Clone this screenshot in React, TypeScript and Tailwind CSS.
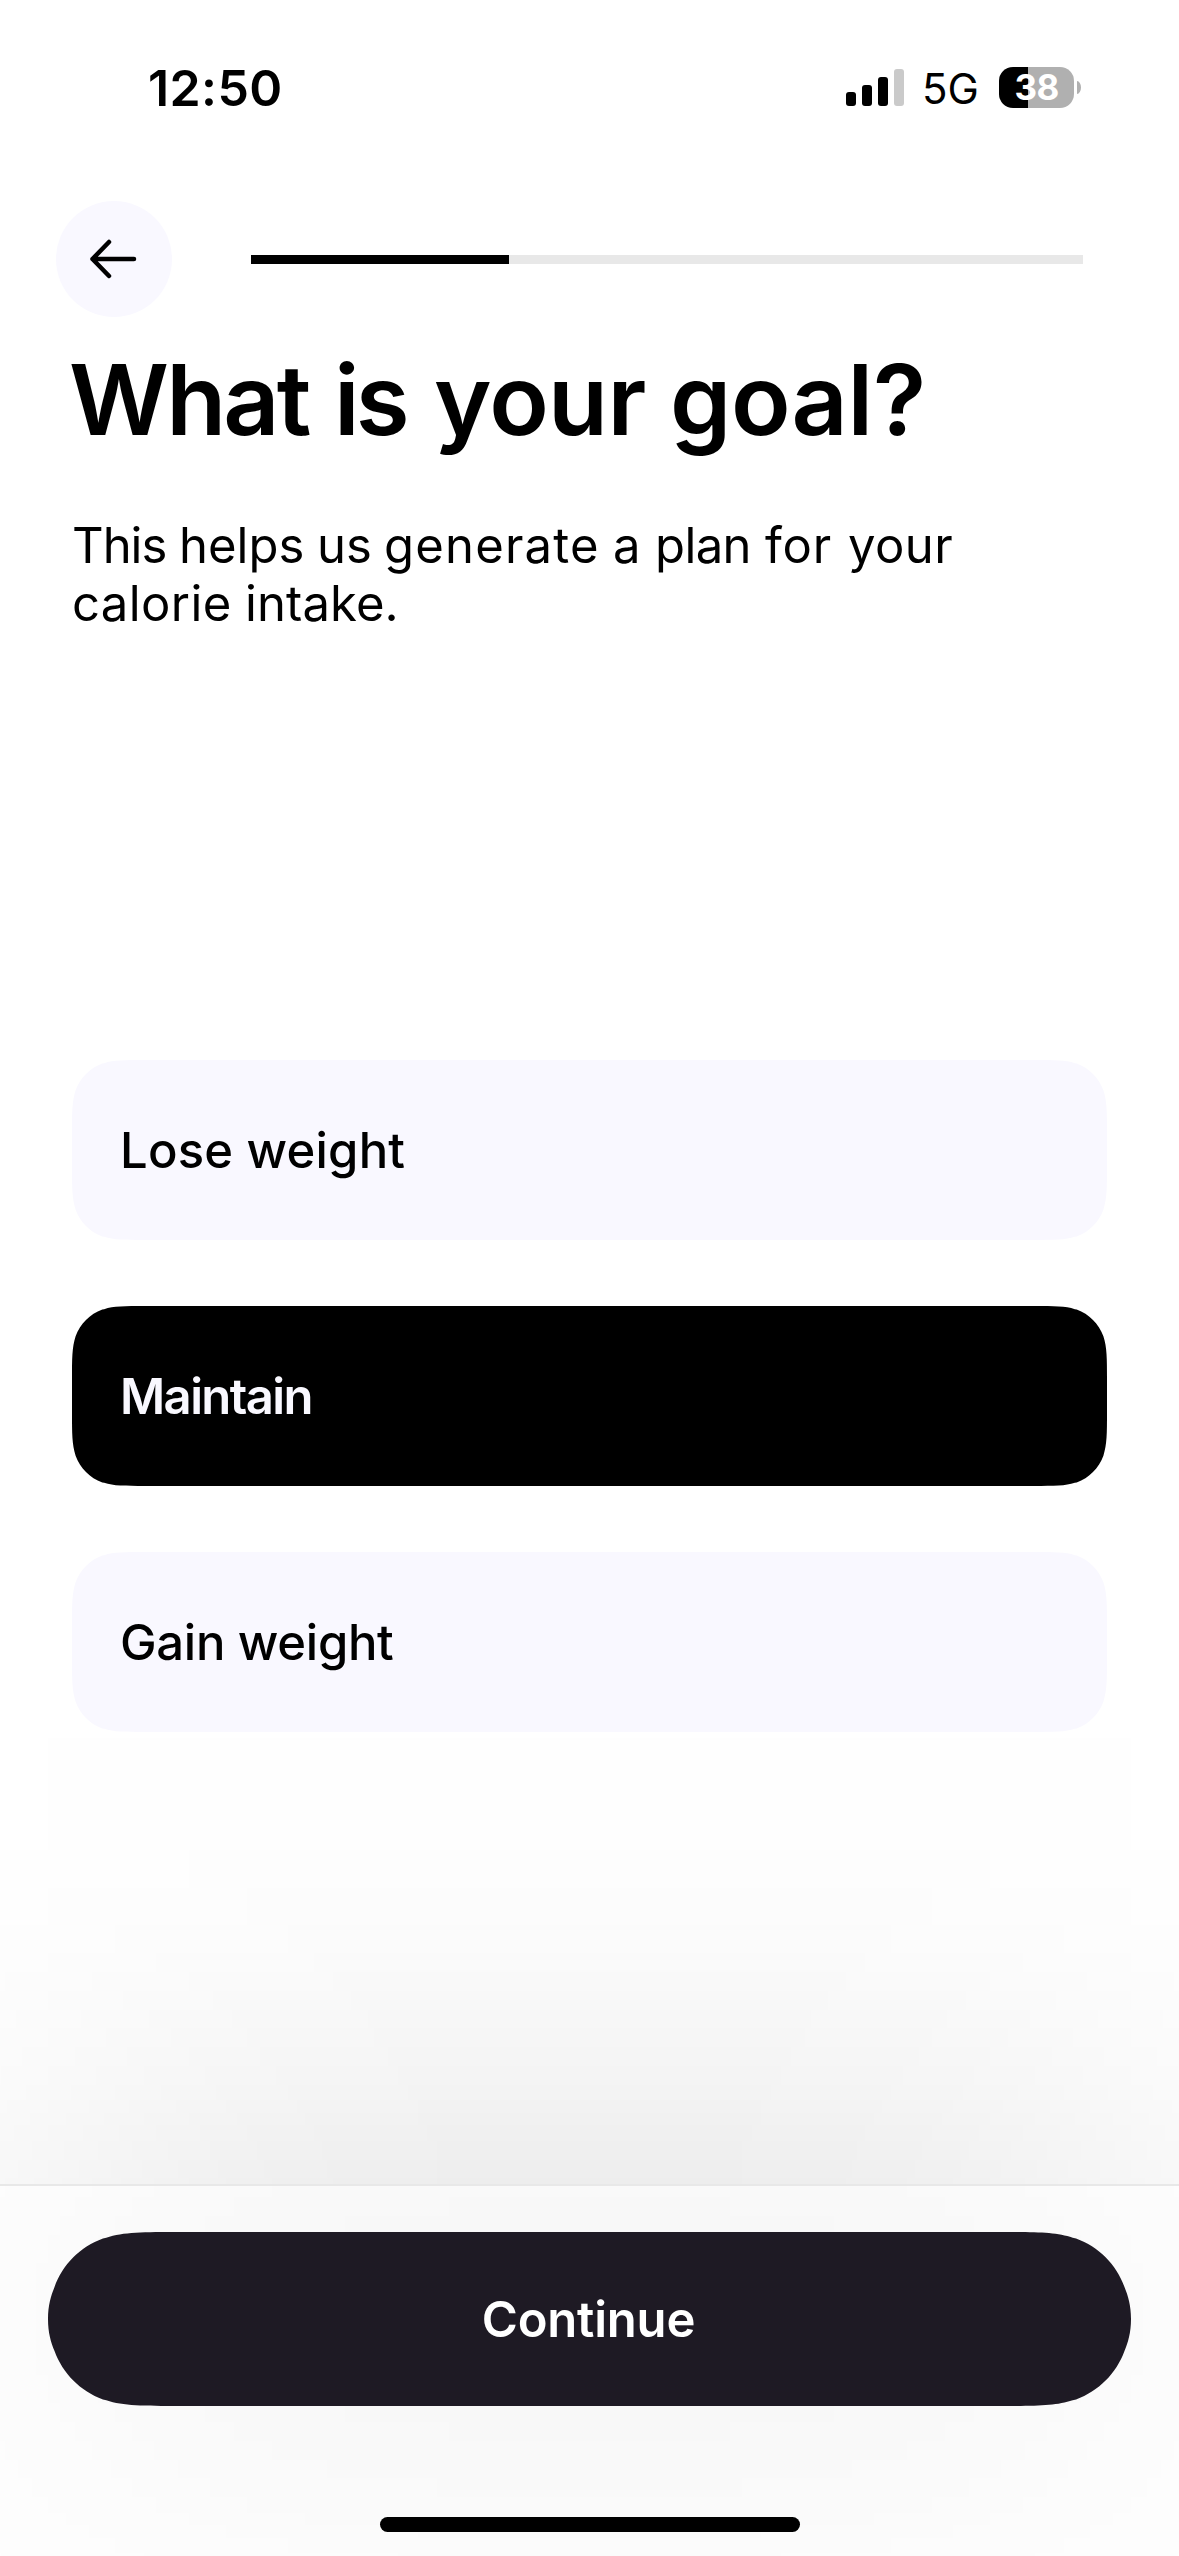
// Outline of a rounded rectangle with continuous (smoothed) corners.
function smoothCorners(w: number, h: number, r: number) {
  const e = 1.52866 * r;
  const pill = e > h / 2;
  const v = pill ? h / 2 : e;
  const k1 = pill ? 0.84 * r : 1.08849 * r;
  const k2 = pill ? 0.735 * r : 0.86841 * r;
  const s = pill ? 0.033 * r : 0;
  const a = 0.66993 * r;
  const b = 0.06549 * r;
  const c = 0.63149 * r;
  const d = 0.07491 * r;
  const m = 0.37282 * r;
  const n = 0.16906 * r;
  const i = 1.08849 * r;
  const j = 0.86841 * r;
  return [
    `M${e} 0L${w - e} 0`,
    `C${w - i} 0 ${w - j} 0 ${w - a} ${b}L${w - c} ${d}`,
    `C${w - m} ${n} ${w - n} ${m} ${w - d} ${c}`,
    `C${w - s} ${k2} ${w} ${k1} ${w} ${v}L${w} ${h - v}`,
    `C${w} ${h - k1} ${w - s} ${h - k2} ${w - d} ${h - c}`,
    `C${w - n} ${h - m} ${w - m} ${h - n} ${w - c} ${h - d}L${w - a} ${h - b}`,
    `C${w - j} ${h} ${w - i} ${h} ${w - e} ${h}L${e} ${h}`,
    `C${i} ${h} ${j} ${h} ${a} ${h - b}L${c} ${h - d}`,
    `C${m} ${h - n} ${n} ${h - m} ${d} ${h - c}`,
    `C${s} ${h - k2} 0 ${h - k1} 0 ${h - v}L0 ${v}`,
    `C0 ${k1} ${s} ${k2} ${d} ${c}`,
    `C${n} ${m} ${m} ${n} ${c} ${d}L${a} ${b}`,
    `C${j} 0 ${i} 0 ${e} 0Z`,
  ].join("");
}

// Gaussian falloff for the glow: vertical color stops and horizontal mask stops.
const SIGMA = 207;
const GLOW_HEIGHT = 1500;
const glowStops = Array.from({ length: 41 }, (_, i) => {
  const y = (i / 40) * GLOW_HEIGHT;
  const t = (y - GLOW_HEIGHT / 2) / SIGMA;
  return `rgba(0,0,0,${(0.088 * Math.exp((-t * t) / 2)).toFixed(5)}) ${y}px`;
}).join(",");
const maskStops = Array.from({ length: 41 }, (_, i) => {
  const x = (i / 40) * 1179;
  const cdf = (z: number) => 1 / (1 + Math.exp(-1.5976 * z - 0.07056 * z * z * z));
  const f = cdf((x - 48) / SIGMA) - cdf((x - 1131) / SIGMA);
  return `rgba(0,0,0,${f.toFixed(4)}) ${x}px`;
}).join(",");

function StatusBar() {
  return (
    <div className="flex h-[201px] items-start pl-[148px] pr-[98px]">
      <span className="mt-[58px] text-[50px] leading-[60px] font-semibold tracking-[0.4px]">12:50</span>
      <div className="ml-auto flex items-start">
        <div className="mt-[69px] flex h-[37px] items-end gap-[6px]">
          <span className="h-[14px] w-[10px] rounded-[3px] bg-black" />
          <span className="h-[21px] w-[10px] rounded-[3px] bg-black" />
          <span className="h-[29px] w-[10px] rounded-[3px] bg-black" />
          <span className="h-[37px] w-[10px] rounded-[3px] bg-[#cacaca]" />
        </div>
        <span className="mt-[64px] ml-[18px] w-[57px] text-[42px] leading-[50px] font-normal">5G</span>
        <div className="mt-[67px] ml-[20px] flex items-center gap-[3px]">
          <div className="flex h-[41px] w-[75px] items-center justify-center overflow-hidden rounded-[14px] bg-[linear-gradient(to_right,#000_29px,#b0b0b0_29px)]">
            <span className="text-[35px] leading-[41px] font-bold tracking-[-0.8px] text-white">38</span>
          </div>
          <span className="h-[13px] w-[4px] rounded-[0_100%_100%_0_/_0_50%_50%_0] bg-[#b0b0b0]" />
        </div>
      </div>
    </div>
  );
}

function Option({ label, tone }: { label: string; tone: string }) {
  return (
    <button
      className={`flex h-[180px] w-[1035px] items-center pt-[2px] pl-[48px] text-left text-[49px] ${tone}`}
      style={{ clipPath: `path("${smoothCorners(1035, 180, 48)}")` }}
    >
      {label}
    </button>
  );
}

export default function App() {
  return (
    <div className="relative flex h-[2556px] w-[1179px] flex-col overflow-hidden bg-white font-['Inter',sans-serif] text-black">
      <StatusBar />

      <div className="flex items-center pl-[56px]">
        <button className="flex size-[116px] items-center justify-center rounded-full bg-[#f9f8ff]" aria-label="Back">
          <svg width="50" height="42" viewBox="0 0 50 42" fill="none" stroke="#000" strokeWidth="4.5" strokeLinecap="round" strokeLinejoin="round">
            <path d="M45 21H3.500M20 4 3.500 21 20 38" />
          </svg>
        </button>
        <div className="ml-[79px] h-[9px] w-[832px] bg-[#e8e8e8]">
          <div className="h-full w-[31%] bg-black" />
        </div>
      </div>

      <main className="flex flex-col px-[72px]">
        <h1 className="mt-[23px] -ml-[3px] flex text-[98px] leading-[120px] font-semibold whitespace-nowrap">
          <span className="w-[265px] tracking-[-2.8px]">What </span>
          <span className="w-[100px] tracking-[-4px]">is </span>
          <span className="w-[236px] tracking-[-0.7px]">your </span>
          <span className="tracking-[-0.2px]">goal?</span>
        </h1>
        <p className="mt-[57px] text-[49px] leading-[58px] whitespace-nowrap">
          <span className="flex">
            <span className="w-[107px] tracking-[-1px]">This </span>
            <span className="w-[138px]">helps </span>
            <span className="w-[67px]">us </span>
            <span className="w-[229px] tracking-[1.2px]">generate </span>
            <span className="w-[42px]">a </span>
            <span className="w-[110px] tracking-[-0.6px]">plan </span>
            <span className="w-[83px] tracking-[0.8px]">for </span>
            <span className="tracking-[0.4px]">your</span>
          </span>
          <span className="flex">
            <span className="w-[173px] tracking-[0.4px]">calorie </span>
            <span className="tracking-[0.1px]">intake.</span>
          </span>
        </p>
        <div className="mt-[427px] flex flex-col gap-[66px]">
          <Option label="Lose weight" tone="bg-[#f9f8ff] font-medium tracking-[0.2px] text-black" />
          <Option label="Maintain" tone="bg-black font-semibold tracking-[-1.6px] text-[#f9f8ff]" />
          <Option label="Gain weight" tone="bg-[#f9f8ff] font-medium tracking-[-0.3px] text-black" />
        </div>
      </main>

      {/* Soft glow behind the footer */}
      <div
        className="pointer-events-none absolute top-[1569px] left-0 h-[1500px] w-full"
        style={{
          backgroundImage: `linear-gradient(to bottom,${glowStops})`,
          maskImage: `linear-gradient(to right,${maskStops})`,
        }}
      />

      <footer className="relative mt-auto flex h-[372px] flex-col items-center border-t-2 border-[#e8e8e8] bg-white/65 bg-clip-padding pt-[46px]">
        <button
          className="h-[174px] w-[1083px] bg-[#1e1a24] pt-[2px] pr-[2px] text-[49px] font-semibold tracking-[-0.2px] text-white"
          style={{ clipPath: `path("${smoothCorners(1083, 174, 87)}")` }}
        >
          Continue
        </button>
        <div className="mt-[111px] h-[15px] w-[420px] rounded-full bg-black" />
      </footer>
    </div>
  );
}
